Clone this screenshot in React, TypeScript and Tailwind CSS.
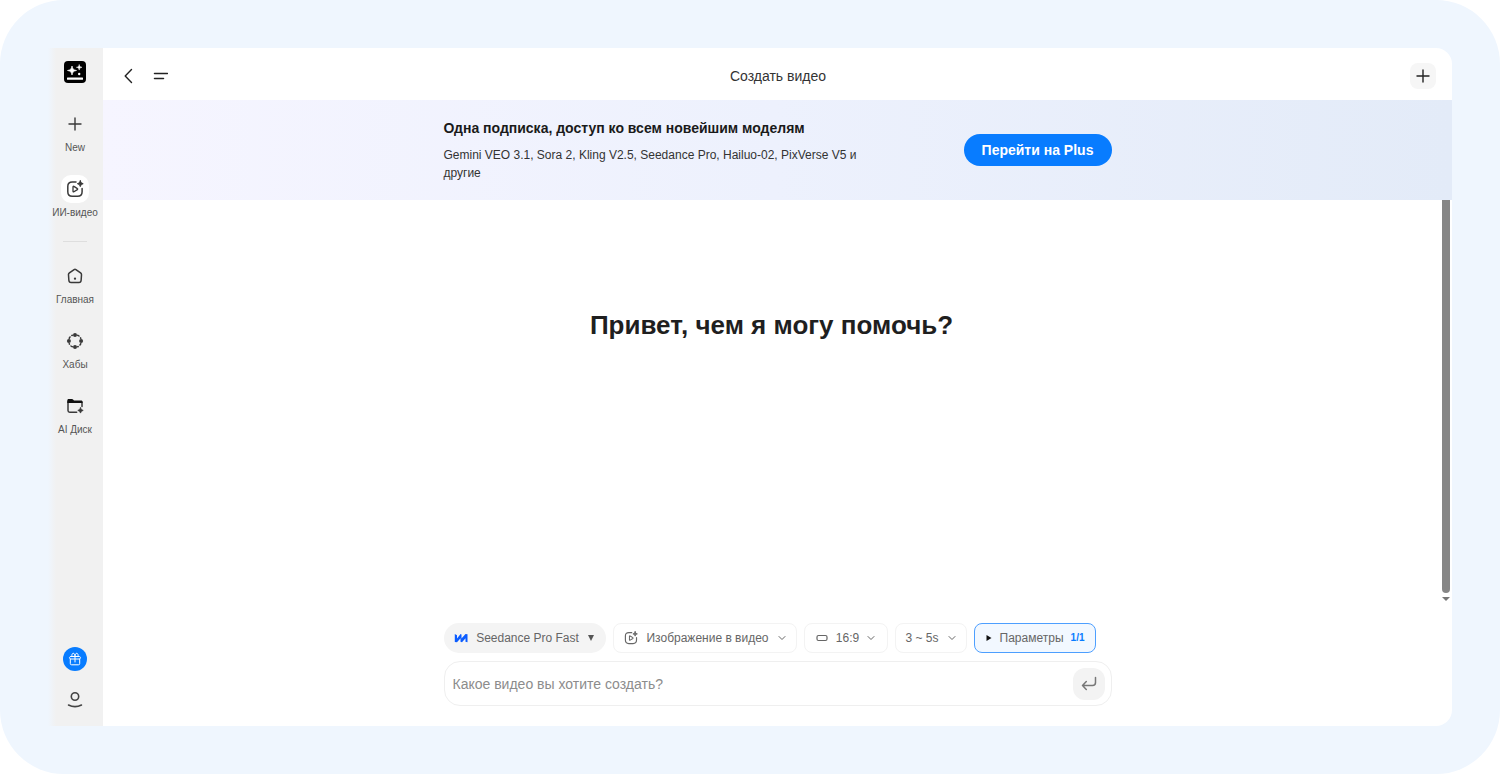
import type { ReactNode } from "react";

const line = { fill: "none", stroke: "currentColor", strokeWidth: 1.5, strokeLinecap: "round", strokeLinejoin: "round" } as const;

function PlusIcon() {
  return (
    <svg className="size-4" viewBox="0 0 16 16" {...line} strokeWidth={1.4} aria-hidden="true">
      <path d="M8 2v12M2 8h12" />
    </svg>
  );
}

function VideoIcon({ className }: { className: string }) {
  return (
    <svg className={className} viewBox="0 0 18 18" {...line} aria-hidden="true">
      <path d="M10 2H6.200C3.400 2 1.800 3.600 1.800 6.300v5.400c0 2.900 1.600 4.500 4.400 4.500h5.400c2.900 0 4.500-1.600 4.500-4.500V8.500" />
      <path d="M7 6.900v4.400c0 .5.500.8.900.5l3.500-2.200c.4-.3.400-.8 0-1L7.900 6.400c-.4-.3-.9 0-.9.500Z" strokeWidth={1.3} />
      <path d="M14.300.8l.9 2 2 .9-2 .9-.9 2-.9-2-2-.9 2-.9.900-2Z" fill="currentColor" strokeWidth={1} />
    </svg>
  );
}

function HomeIcon() {
  return (
    <svg className="size-4" viewBox="0 0 18 18" {...line} strokeWidth={1.7} aria-hidden="true">
      <path d="M8 1.700 2.700 5.500C1.900 6.100 1.500 6.800 1.700 7.800l.4 6c.1 1.700.9 2.500 2.500 2.500h8.800c1.600 0 2.400-.8 2.500-2.500l.4-6c.1-1-.2-1.700-1-2.300L10 1.700c-.7-.5-1.300-.5-2 0Z" />
      <circle cx="9" cy="12" r="1.300" fill="currentColor" stroke="none" />
    </svg>
  );
}

function HubIcon() {
  return (
    <svg className="size-[18px]" viewBox="0 0 18 18" {...line} aria-hidden="true">
      <path d="M11.600 3.200c1.500.6 2.600 1.700 3.200 3.200M14.800 11.600c-.6 1.500-1.700 2.600-3.200 3.200M6.400 14.800c-1.500-.6-2.600-1.700-3.200-3.200M3.200 6.400c.6-1.500 1.700-2.600 3.200-3.200" strokeDasharray="1.600 2.300" />
      <g fill="currentColor" stroke="none">
        <circle cx="9" cy="2.900" r="2" />
        <circle cx="15.100" cy="9" r="2" />
        <circle cx="9" cy="15.100" r="2" />
        <circle cx="2.900" cy="9" r="2" />
      </g>
    </svg>
  );
}

function FolderIcon() {
  return (
    <svg className="size-[18px]" viewBox="0 0 18 18" {...line} aria-hidden="true">
      <path d="M16 9.500V6.200c0-1-.6-1.500-1.500-1.500H2v8.800C2 14.600 2.600 15.200 3.700 15.200h7" />
      <path d="M1.300 6V3.600c0-1 .6-1.500 1.500-1.500h3.100c.6 0 1 .2 1.400.6l.7.800h7c1 0 1.700.6 1.700 1.500v1Z" fill="#111" stroke="none" />
      <path d="M14.500 10.800l.9 1.700 1.800.9-1.800.9-.9 1.800-.9-1.800-1.800-.9 1.800-.9.900-1.700Z" fill="currentColor" strokeWidth={0.8} />
    </svg>
  );
}

function LogoIcon() {
  return (
    <svg className="size-[22px]" viewBox="0 0 22 22" aria-hidden="true">
      <rect width="22" height="22" rx="4" fill="#000" />
      <g fill="#fff">
        <path d="M8 5c.5 3 1.500 4 4.500 4.500-3 .5-4 1.500-4.500 4.500-.5-3-1.500-4-4.500-4.500 3-.5 4-1.500 4.500-4.500Z" stroke="#fff" strokeWidth=".7" />
        <path d="M15.200 3.500c.4 2 .8 2.400 2.800 2.800-2 .4-2.400.8-2.800 2.800-.4-2-.8-2.400-2.800-2.800 2-.4 2.400-.8 2.800-2.800Z" stroke="#fff" strokeWidth=".5" />
        <circle cx="15.200" cy="13" r="1.200" />
        <rect x="3" y="16.500" width="16" height="2.200" rx=".5" />
      </g>
    </svg>
  );
}

function GiftIcon() {
  return (
    <svg className="size-3.5" viewBox="0 0 14 14" {...line} strokeWidth={1} aria-hidden="true">
      <path d="M3 4.500h8c1 0 1.500.4 1.500 1.200S12 7 11 7H3c-1 0-1.500-.5-1.500-1.300S2 4.500 3 4.500ZM2.300 7v4.500c0 .9.400 1.300 1.300 1.300h6.800c.9 0 1.300-.4 1.300-1.300V7M7 4.500v5.500M4 4.500c-.5-1.700.2-3.200 1.300-3.200C6.400 1.300 7 2.500 7 4.500c0-2 .6-3.200 1.700-3.200 1.100 0 1.800 1.500 1.300 3.200" />
    </svg>
  );
}

function Chevron() {
  return (
    <svg className="size-2 shrink-0" viewBox="0 0 8 8" {...line} strokeWidth={1} aria-hidden="true">
      <path d="m1 2.500 3 3 3-3" />
    </svg>
  );
}

function NavItem({ label, active, children }: { label: string; active?: boolean; children: ReactNode }) {
  return (
    <a href="#" className="flex w-[46px] flex-col items-center gap-[3px] text-[#3a3a3a]">
      <span className={active ? "grid size-7 place-items-center rounded-[10px] bg-white" : "grid size-7 place-items-center"}>
        {children}
      </span>
      <span className="text-[10px] leading-[14px] whitespace-nowrap text-[#555]">{label}</span>
    </a>
  );
}

const chip = "flex h-[30px] items-center justify-between rounded-lg border border-[#f3f3f3] bg-white whitespace-nowrap text-[#666]";

export default function App() {
  return (
    <div className="min-h-screen bg-white font-['Liberation_Sans',Arial,sans-serif]">
      <div className="flex min-h-screen rounded-[64px] bg-[#eff6fe] p-12">
        <div className="flex min-w-0 flex-1 overflow-hidden rounded-r-2xl">
          <nav
            className="flex w-[55px] shrink-0 flex-col items-center bg-linear-to-r from-[#eff6fe] to-[#f1f1f1] to-[8px] pt-[13px] pr-px pb-[17px]"
            aria-label="Меню"
          >
            <LogoIcon />
            <div className="mt-[27px] flex flex-col items-center gap-5">
              <NavItem label="New"><PlusIcon /></NavItem>
              <NavItem label="ИИ-видео" active><VideoIcon className="size-[18px]" /></NavItem>
              <div className="mt-px h-px w-6 bg-[#dedede]" />
              <NavItem label="Главная"><HomeIcon /></NavItem>
              <NavItem label="Хабы"><HubIcon /></NavItem>
              <NavItem label="AI Диск"><FolderIcon /></NavItem>
            </div>
            <button className="mt-auto grid size-6 place-items-center rounded-full bg-[#087cff] text-white" aria-label="Подарок">
              <GiftIcon />
            </button>
            <button className="mt-5 text-[#444]" aria-label="Профиль">
              <svg className="size-[18px]" viewBox="0 0 18 18" {...line} strokeWidth={1.6} aria-hidden="true">
                <circle cx="9" cy="5.500" r="3.700" />
                <path d="M2.500 14c4 2 9 2 13 0" />
              </svg>
            </button>
          </nav>

          <main className="flex min-w-0 flex-1 flex-col bg-white">
            <header className="grid h-[52px] shrink-0 grid-cols-[1fr_auto_1fr] items-center pt-1 pr-4 pl-[17px] text-[#222]">
              <div className="flex items-center gap-4">
                <button aria-label="Назад">
                  <svg className="size-4" viewBox="0 0 16 16" {...line} strokeWidth={1.4} aria-hidden="true">
                    <path d="M11.500 1.500 5.200 8l6.300 6.500" />
                  </svg>
                </button>
                <button aria-label="История">
                  <svg className="size-4" viewBox="0 0 16 16" {...line} aria-hidden="true">
                    <path d="M2.500 5.500h13M2.500 10.500h9" />
                  </svg>
                </button>
              </div>
              <h1 className="text-sm text-[#333]">Создать видео</h1>
              <button className="grid size-[26px] place-items-center justify-self-end rounded-lg bg-[#f6f6f6]" aria-label="Новый чат">
                <PlusIcon />
              </button>
            </header>

            <section className="flex h-[100px] shrink-0 justify-center bg-linear-to-r from-[#f6f5ff] via-[#edf1fd] to-[#e3ebf8]">
              <div className="flex w-[668px] items-center justify-between">
                <div className="w-[440px]">
                  <h2 className="text-sm leading-5 font-bold text-[#1a1a1a]">Одна подписка, доступ ко всем новейшим моделям</h2>
                  <p className="mt-2 text-xs leading-[18px] text-[#333]">
                    Gemini VEO 3.1, Sora 2, Kling V2.5, Seedance Pro, Hailuo-02, PixVerse V5 и другие
                  </p>
                </div>
                <button className="h-8 w-[148px] rounded-full bg-[#087cff] text-sm font-bold text-white">Перейти на Plus</button>
              </div>
            </section>

            <section className="flex min-h-[405px] flex-1">
              <div className="flex flex-1 justify-center pt-[105px]">
                <h2 className="text-[26px] leading-10 font-bold text-[#1f1f1f]">Привет, чем я могу помочь?</h2>
              </div>
              <div className="flex w-3 flex-col items-center" aria-hidden="true">
                <div className="w-2 flex-1 rounded-b-full bg-[#868686]" />
                <svg className="mt-1 mb-1 h-1 w-2" viewBox="0 0 8 4"><path d="M0 0h8L4 4Z" fill="#777" /></svg>
              </div>
            </section>

            <form className="mx-auto mt-[18px] w-[668px] pb-5 text-xs" onSubmit={(e) => e.preventDefault()}>
              <div className="flex h-[30px] items-center gap-[7px]">
                <button type="button" className="flex h-[30px] w-[162px] items-center justify-between rounded-full bg-[#f4f4f4] px-2.5 whitespace-nowrap text-[#666]">
                  <svg className="h-2.5 w-3.5" viewBox="0 0 14 10" aria-hidden="true">
                    <path d="M.8 1 3 2.200v3.200L6.600 1l.9.600v3.800L11.500 1l2 .3v8l-2-.6V5.200L8 9.200l-1.500-.5V5.300L3 9.200.8 9Z" fill="#0b5cff" />
                  </svg>
                  Seedance Pro Fast
                  <svg className="size-2" viewBox="0 0 8 8" aria-hidden="true"><path d="M1 1h6L4 7Z" fill="#555" /></svg>
                </button>
                <button type="button" className={`${chip} w-[184px] px-2.5`}>
                  <VideoIcon className="size-3.5" />
                  Изображение в видео
                  <Chevron />
                </button>
                <button type="button" className={`${chip} w-[84px] px-[11px]`}>
                  <svg className="h-2 w-3" viewBox="0 0 12 8" {...line} strokeWidth={1.2} aria-hidden="true">
                    <rect x="1" y="1.500" width="10" height="5" rx="1.500" />
                  </svg>
                  16:9
                  <Chevron />
                </button>
                <button type="button" className={`${chip} w-[72px] px-2.5`}>
                  3 ~ 5s
                  <Chevron />
                </button>
                <button type="button" className="flex h-[30px] w-[122px] items-center justify-between rounded-lg border border-[#4d9fff] bg-[#f2f8ff] px-2.5 whitespace-nowrap text-[#666]">
                  <svg className="size-2" viewBox="0 0 8 8" aria-hidden="true"><path d="M1.500 1v6l5-3Z" fill="#111" /></svg>
                  Параметры
                  <span className="text-[10px] font-bold text-[#087cff]">1/1</span>
                </button>
              </div>
              <div className="mt-2 flex h-[45px] items-center rounded-2xl border border-[#efefef] bg-white pr-1.5 pl-2">
                <input
                  type="text"
                  aria-label="Описание видео"
                  placeholder="Какое видео вы хотите создать?"
                  className="min-w-0 flex-1 bg-transparent text-sm outline-none placeholder:text-[#8c8c8c]"
                />
                <button type="submit" className="grid size-8 place-items-center rounded-xl bg-[#f3f3f3] text-[#777]" aria-label="Отправить">
                  <svg className="size-4" viewBox="0 0 16 16" {...line} aria-hidden="true">
                    <path d="M14.500 1.500v5c0 2-1 3-3 3h-10M5.300 5.500 1.500 9.500l3.800 4" />
                  </svg>
                </button>
              </div>
            </form>
          </main>
        </div>
      </div>
    </div>
  );
}
